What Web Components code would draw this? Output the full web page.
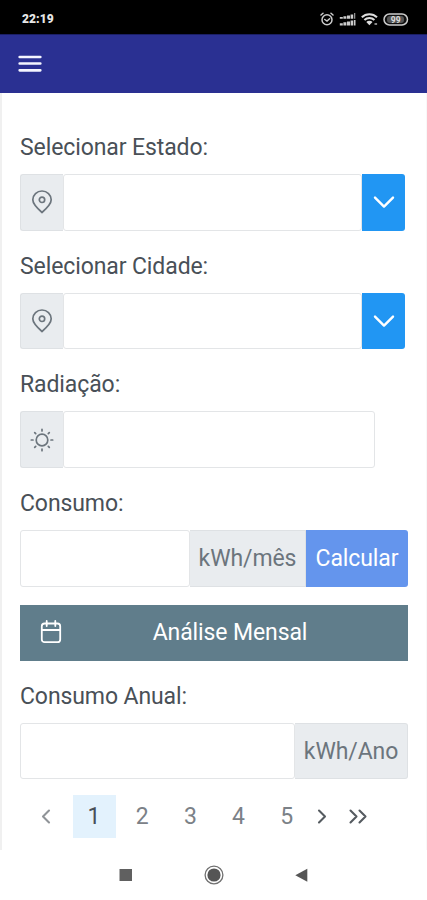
<!DOCTYPE html>
<html lang="pt-BR">
<head>
<meta charset="utf-8">
<meta name="viewport" content="width=device-width, initial-scale=1">
<title>Consumo</title>
<style>
  body {
    margin: 0;
    background: #fff;
    font-family: Roboto, "Liberation Sans", sans-serif;
  }
</style>
</head>
<body>
<solar-app></solar-app>

<script>
const ICONS = {
  pin: `<svg width="22" height="24" viewBox="0 0 22 24" fill="none" stroke="#6c757d" stroke-width="1.700">
    <path d="M11 22.500C5.800 18 1.800 14.200 1.800 9.800a9.200 8.800 0 0 1 18.400 0c0 4.400-4 8.200-9.200 12.700z"/><circle cx="11" cy="9.800" r="2.700"/></svg>`,
  sun: `<svg width="24" height="24" viewBox="0 0 24 24" fill="none" stroke="#6c757d" stroke-width="1.700" stroke-linecap="round">
    <circle cx="12" cy="12" r="5.800"/><path d="M12 1.300v1.700M12 21v1.700M1.300 12H3M21 12h1.700M4.700 4.700l1 1M18.300 18.300l1 1M4.700 19.300l1-1M18.300 5.700l1-1"/></svg>`,
  down: `<svg width="24" height="24" viewBox="0 0 24 24" fill="none" stroke="#fff" stroke-width="2.400" stroke-linecap="round" stroke-linejoin="round"><path d="M3 7.600l9 9 9-9"/></svg>`,
  calendar: `<svg width="22" height="24" viewBox="0 0 22 24" fill="none" stroke="#fff" stroke-width="1.800" stroke-linecap="round" stroke-linejoin="round">
    <rect x="1.800" y="3.500" width="18.400" height="18.700" rx="2.800"/><path d="M1.800 10h18.400M6.700 1v5M15.300 1v5"/></svg>`
};

class StatusBar extends HTMLElement {
  constructor() {
    super();
    this.attachShadow({ mode: 'open' });
  }

  connectedCallback() {
    this.shadowRoot.innerHTML = /* html */`
      <style>
        :host {
          display: flex;
          align-items: center;
          justify-content: space-between;
          box-sizing: border-box;
          height: 34px;
          padding: 4px 18px 0 22px;
          background: #000;
          color: #e6e6e6;
          font-size: 12px;
          font-weight: 900;
          letter-spacing: .1px;
        }
        .icones { display: flex; align-items: center; gap: 5px; }
        svg { display: block; }
      </style>
      <span>22:19</span>
      <div class="icones">
        <svg width="14" height="14" viewBox="0 0 14 14" fill="none" stroke="#ccc" stroke-width="1.500" stroke-linecap="round">
          <circle cx="7" cy="7.700" r="5"/><path d="M1 3l2-1.700M13 3l-2-1.700M4.800 7.500L7 9l2.600-2.200"/></svg>
        <svg width="17" height="13" viewBox="0 0 17 13" fill="#ccc">
          <path d="M.8 4h3v1.700h-3zM4.400 3.300h3v2.400h-3zM8 2.400h3v3.300H8zM11.600 1.500h2.600v4.200h-2.600zM15.300 0h.9v5.700h-.9z"/>
          <path d="M.8 10.300h3v2.100h-3zM4.400 9.300h3v3.100h-3zM8 8.500h3v3.900H8zM11.600 7.600h2.600v4.800h-2.600zM14.900 7h1.600v5.400h-1.600z"/></svg>
        <svg width="17" height="13" viewBox="0 0 17 13" fill="none" stroke="#ddd" stroke-width="2">
          <path d="M.8 4.300a10.800 10.800 0 0 1 15.200 0M3.400 7a7 7 0 0 1 10 0"/>
          <path d="M8.400 12.300L5.300 9a4.300 4.300 0 0 1 6.200 0z" fill="#ddd" stroke="none"/>
          <path d="M13.500 11h2.600" stroke="#888"/></svg>
        <svg width="26" height="13" viewBox="0 0 26 13">
          <rect x="1" y="1" width="23.500" height="11" rx="5.500" fill="#111" stroke="#ccc" stroke-width="1.500"/>
          <rect x="4" y="3" width="17" height="7" rx="3" fill="#555"/>
          <text x="12.700" y="9.600" text-anchor="middle" font-family="Roboto, sans-serif" font-size="8.500" font-weight="700" fill="#ddd">99</text></svg>
      </div>
    `;
  }
}

class AppToolbar extends HTMLElement {
  constructor() {
    super();
    this.attachShadow({ mode: 'open' });
  }

  connectedCallback() {
    this.shadowRoot.innerHTML = /* html */`
      <style>
        :host {
          display: flex;
          align-items: center;
          box-sizing: border-box;
          height: 59px;
          padding: 0 18px;
          background: #2a3092;
          border-top: 1px solid #1b1f66;
        }
        button { display: block; padding: 0; border: 0; background: none; }
        svg { display: block; }
      </style>
      <button aria-label="Menu">
        <svg width="24" height="20" viewBox="0 0 24 20" stroke="#f4f5ff" stroke-width="2.700" stroke-linecap="round">
          <path d="M1.700 3h20.600M1.700 9.500h20.600M1.700 16.300h20.600"/></svg>
      </button>
    `;
  }
}

// Label on top, control passed in through the slot
class FormField extends HTMLElement {
  constructor() {
    super();
    this.attachShadow({ mode: 'open' });
  }

  connectedCallback() {
    this.shadowRoot.innerHTML = /* html */`
      <style>
        :host { display: block; }
        label {
          display: block;
          height: 26px;
          margin-bottom: 14px;
          line-height: 27px;
          font-size: 23px;
          color: #495057;
          letter-spacing: -.1px;
        }
      </style>
      <label>${this.getAttribute('label')}</label>
      <slot></slot>
    `;
  }
}

class InputGroup extends HTMLElement {
  constructor() {
    super();
    this.attachShadow({ mode: 'open' });
  }

  get icon() { return this.getAttribute('icon'); }
  get unit() { return this.getAttribute('unit'); }
  get action() { return this.getAttribute('action'); }

  render() {
    const addon = this.icon ? `<span class="addon icone">${ICONS[this.icon]}</span>` : '';
    const unit = this.unit ? `<span class="addon unidade">${this.unit}</span>` : '';
    const seta = this.hasAttribute('dropdown') ? `<button class="seta" aria-label="Abrir">${ICONS.down}</button>` : '';
    const action = this.action ? `<button class="acao">${this.action}</button>` : '';

    this.shadowRoot.innerHTML = /* html */`
      <style>
        :host {
          display: flex;
          height: 56.5px;
          font-size: 23px;
          letter-spacing: -.1px;
        }
        input {
          flex: 1;
          min-width: 0;
          box-sizing: border-box;
          border: 1px solid #e3e5e7;
          border-radius: 3px;
          background: #fff;
          outline: none;
        }
        .addon {
          display: flex;
          align-items: center;
          justify-content: center;
          box-sizing: border-box;
          background: #e9ecef;
          border: 1px solid #dee1e4;
          color: #6c757d;
        }
        .icone { width: 43px; border-right: 0; border-radius: 3px 0 0 3px; }
        .unidade { width: var(--unit-width, 116px); border-left: 0; }
        .unidade:last-child { border-radius: 0 3px 3px 0; }
        button {
          display: flex;
          align-items: center;
          justify-content: center;
          padding: 0;
          border: 0;
          border-radius: 0 3px 3px 0;
          color: #fff;
          font: inherit;
          letter-spacing: inherit;
        }
        .seta { width: 43px; background: #2196f3; }
        .acao { width: 102px; background: #6495ed; }
        svg { display: block; }
      </style>
      ${addon}<input type="text">${unit}${seta}${action}
    `;
  }

  connectedCallback() {
    this.render();
  }
}

class WideButton extends HTMLElement {
  constructor() {
    super();
    this.attachShadow({ mode: 'open' });
  }

  connectedCallback() {
    this.shadowRoot.innerHTML = /* html */`
      <style>
        :host { display: block; }
        button {
          display: flex;
          align-items: center;
          box-sizing: border-box;
          width: 100%;
          height: 56px;
          padding: 0 20px 1px;
          border: 0;
          background: #607d8b;
          color: #fff;
          font: inherit;
          font-size: 23px;
          letter-spacing: -.1px;
        }
        .texto { flex: 1; text-align: center; padding-left: 10px; }
        svg { display: block; }
      </style>
      <button>${ICONS.calendar}<span class="texto"><slot></slot></span></button>
    `;
  }
}

class PagePager extends HTMLElement {
  constructor() {
    super();
    this.attachShadow({ mode: 'open' });
  }

  connectedCallback() {
    const pages = [1, 2, 3, 4, 5].map(n => `
      <span class="pagina${n === 1 ? ' ativa' : ''}">${n}</span>
    `).join('');

    this.shadowRoot.innerHTML = /* html */`
      <style>
        :host {
          display: flex;
          align-items: center;
          height: 43px;
          color: #7b8187;
          font-size: 23px;
        }
        .pagina {
          width: 43px;
          margin-right: 5.200px;
          line-height: 44px;
          height: 43px;
          text-align: center;
        }
        .ativa { background: #e3f2fd; color: #495057; }
        svg { display: block; fill: none; stroke: #555b60; stroke-width: 2.100; stroke-linecap: round; stroke-linejoin: round; }
        .anterior { margin: 0 20.500px 0 20px; stroke: #909498; }
        .proximo { margin-left: 2.500px; }
        .ultimo { margin-left: 20px; }
      </style>
      <svg class="anterior" width="12" height="16" viewBox="0 0 12 16"><path d="M9 2.500L3 8.500l6 6"/></svg>
      ${pages}
      <svg class="proximo" width="12" height="16" viewBox="0 0 12 16"><path d="M3 2.500l6 6-6 6"/></svg>
      <svg class="ultimo" width="20" height="16" viewBox="0 0 20 16"><path d="M2.500 2.500l6 6-6 6M11.500 2.500l6 6-6 6"/></svg>
    `;
  }
}

class SystemNav extends HTMLElement {
  constructor() {
    super();
    this.attachShadow({ mode: 'open' });
  }

  connectedCallback() {
    this.shadowRoot.innerHTML = /* html */`
      <style>
        :host {
          display: grid;
          grid-template-columns: repeat(3, 88px);
          justify-content: center;
          align-items: center;
          justify-items: center;
          height: 50px;
          background: #fff;
        }
        svg { display: block; }
      </style>
      <svg width="20" height="20" viewBox="0 0 20 20"><path d="M3.500 4h12.500v12h-12.500z" fill="#606060"/></svg>
      <svg width="20" height="20" viewBox="0 0 20 20"><circle cx="10" cy="10" r="8.900" fill="none" stroke="#707070" stroke-width="1.300"/><circle cx="10" cy="10" r="6.600" fill="#555"/></svg>
      <svg width="20" height="20" viewBox="0 0 20 20"><path d="M15.300 3.700v13L3.300 10.200z" fill="#555"/></svg>
    `;
  }
}

class SolarApp extends HTMLElement {
  constructor() {
    super();
    this.attachShadow({ mode: 'open' });
  }

  connectedCallback() {
    this.shadowRoot.innerHTML = /* html */`
      <style>
        :host {
          display: flex;
          flex-direction: column;
          height: 900px;
          overflow: hidden;
        }
        main {
          flex: 1;
          display: flex;
          flex-direction: column;
          box-sizing: border-box;
          padding: 41px 18px 0;
          border-left: 2px solid #f0f0f0;
          border-right: 1px solid #f8f8f8;
        }
        form-field { margin-bottom: 22.200px; }
        .lista { width: 385px; }
        .radiacao { width: 355px; }
        .consumo { margin-bottom: 18.200px; }
        .anual { margin: 22px 0 15.500px; --unit-width: 113px; }
      </style>
      <status-bar></status-bar>
      <app-toolbar></app-toolbar>
      <main>
        <form-field label="Selecionar Estado:">
          <input-group class="lista" icon="pin" dropdown></input-group>
        </form-field>
        <form-field label="Selecionar Cidade:">
          <input-group class="lista" icon="pin" dropdown></input-group>
        </form-field>
        <form-field label="Radiação:">
          <input-group class="radiacao" icon="sun"></input-group>
        </form-field>
        <form-field class="consumo" label="Consumo:">
          <input-group unit="kWh/mês" action="Calcular"></input-group>
        </form-field>
        <wide-button>Análise Mensal</wide-button>
        <form-field class="anual" label="Consumo Anual:">
          <input-group unit="kWh/Ano"></input-group>
        </form-field>
        <page-pager></page-pager>
      </main>
      <system-nav></system-nav>
    `;
  }
}

customElements.define('status-bar', StatusBar);
customElements.define('app-toolbar', AppToolbar);
customElements.define('form-field', FormField);
customElements.define('input-group', InputGroup);
customElements.define('wide-button', WideButton);
customElements.define('page-pager', PagePager);
customElements.define('system-nav', SystemNav);
customElements.define('solar-app', SolarApp);
</script>
</body>
</html>
